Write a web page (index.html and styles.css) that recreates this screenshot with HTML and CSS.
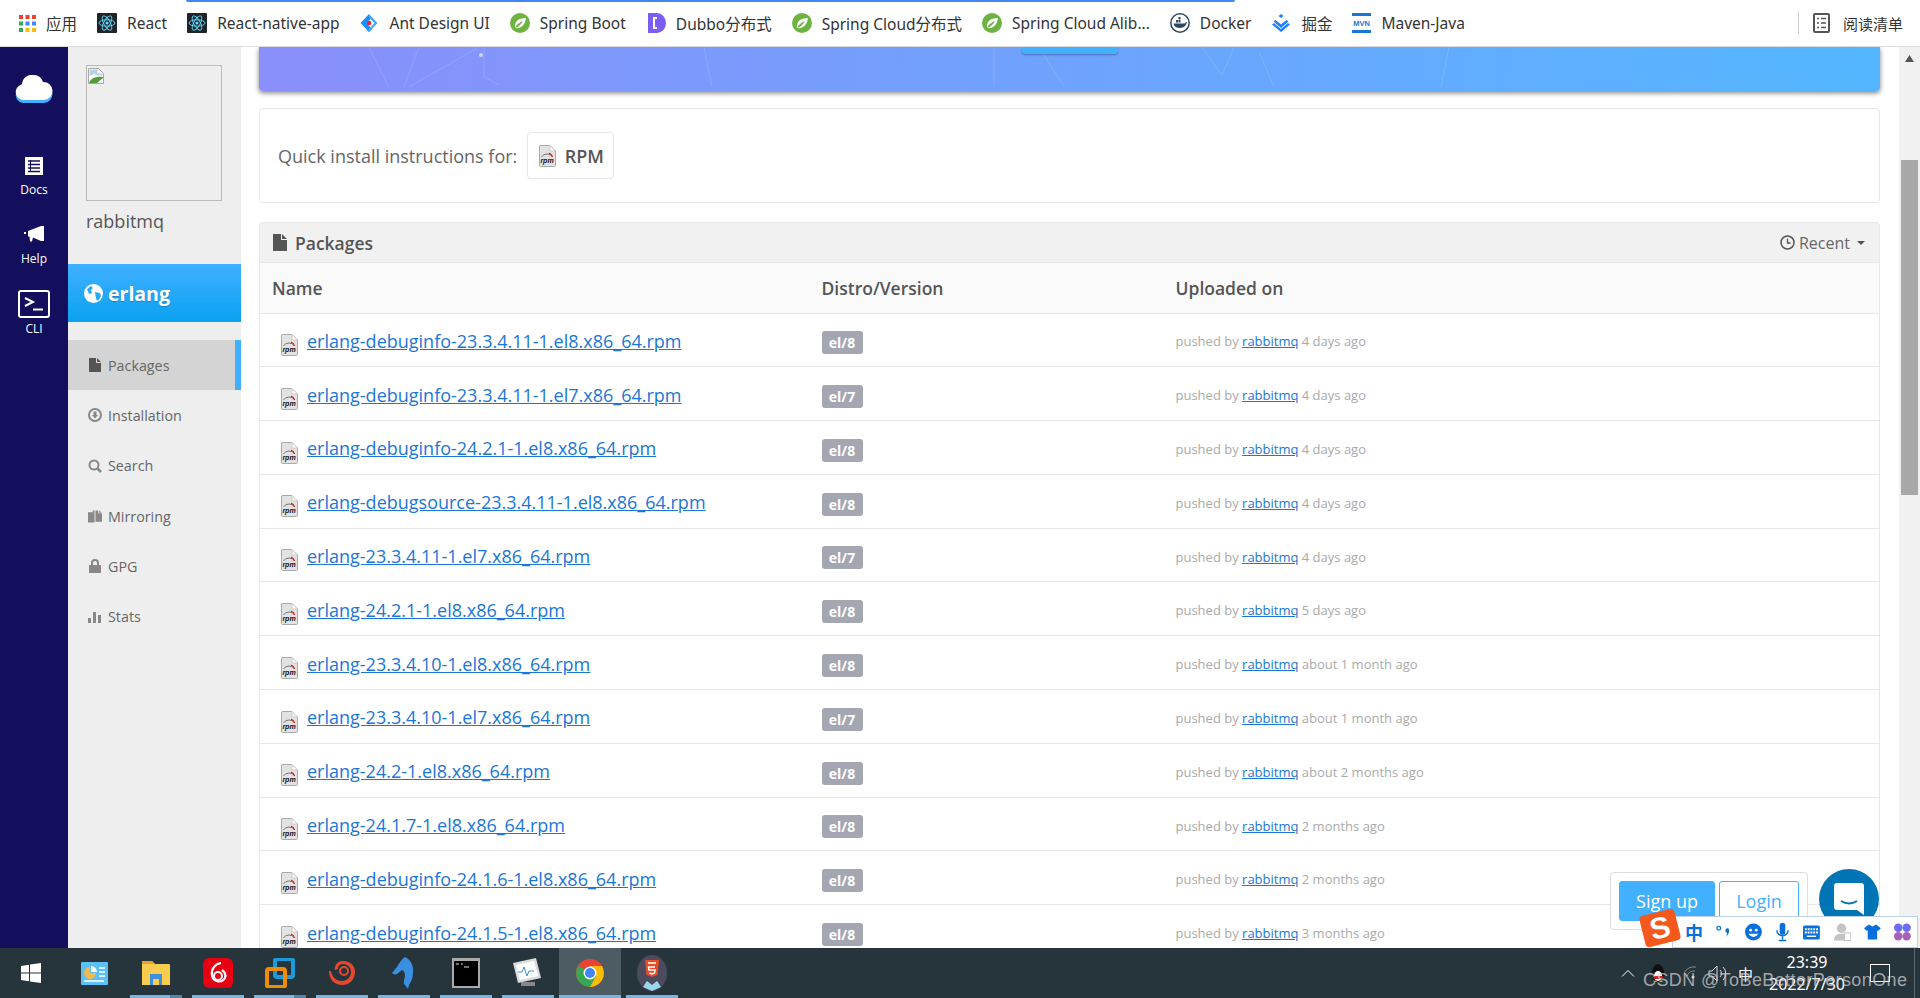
FILE: index.html
```html
<!DOCTYPE html>
<html>
  <head>
    <title>rabbitmq / erlang - Packages</title>
    <link rel="stylesheet" href="styles.css">
  </head>
  <body>
    <svg class="defs" width="0" height="0">
      <symbol id="rpm" viewBox="0 0 18 22">
        <path d="M2 0.500h10l5.500 5.500v14.500a1 1 0 0 1-1 1h-14a1 1 0 0 1-1-1v-19.500a1 1 0 0 1 1-.5z" fill="#e2e2e2" stroke="#aaa"/>
        <path d="M12 .5v5.500h5.500z" fill="#fff" stroke="#ccc"/>
        <path d="M3.500 12a6 5 0 0 1 11 0" fill="none" stroke="#777" stroke-width="1"/>
        <path d="M11 8.200a6 5 0 0 1 3.500 3.800" fill="none" stroke="#d22" stroke-width="1.300"/>
        <text x="9" y="17.500" font-family="Liberation Sans" font-size="7" font-weight="700" font-style="italic" text-anchor="middle" fill="#111">rpm</text>
      </symbol>
      <symbol id="spring" viewBox="0 0 20 20">
        <circle cx="10" cy="10" r="10" fill="#6db33f"/>
        <path d="M5 15c-1-6 3-10 11-10-1 7-5 11-11 10z" fill="#fff"/>
        <path d="M5 15c2-4 5-6 8-7-2 3-4 6-8 7z" fill="#6db33f"/>
      </symbol>
      <symbol id="react" viewBox="0 0 20 20">
        <rect width="20" height="20" rx="1" fill="#20232a"/>
        <g fill="none" stroke="#61dafb" stroke-width=".9">
          <ellipse cx="10" cy="10" rx="8" ry="3.200"/>
          <ellipse cx="10" cy="10" rx="8" ry="3.200" transform="rotate(60 10 10)"/>
          <ellipse cx="10" cy="10" rx="8" ry="3.200" transform="rotate(120 10 10)"/>
        </g>
        <circle cx="10" cy="10" r="1.600" fill="#61dafb"/>
      </symbol>
    </svg>

    <div class="bookmarks">
      <a class="mark">
        <svg width="17" height="17" viewBox="0 0 17 17">
          <g fill="#ea4335"><rect width="4" height="4"/><rect x="6.500" width="4" height="4"/><rect x="13" width="4" height="4" fill="#ea4335"/></g>
          <g fill="#4285f4"><rect y="6.500" width="4" height="4" fill="#34a853"/><rect x="6.500" y="6.500" width="4" height="4"/><rect x="13" y="6.500" width="4" height="4" fill="#4285f4"/></g>
          <g fill="#fbbc05"><rect y="13" width="4" height="4" fill="#34a853"/><rect x="6.500" y="13" width="4" height="4"/><rect x="13" y="13" width="4" height="4"/></g>
        </svg>
        应用
      </a>
      <a class="mark"><svg width="20" height="20"><use href="#react"/></svg>React</a>
      <a class="mark"><svg width="20" height="20"><use href="#react"/></svg>React-native-app</a>
      <a class="mark">
        <svg width="20" height="20" viewBox="0 0 20 20">
          <path d="M10 1L1.500 10 10 19l3-3-5.500-6L10 7.500 12 5.500z" fill="#1890ff"/>
          <path d="M10 1l8.500 9-8.500 9-1.500-1.500 7-7.500-5-5z" fill="#40a9ff"/>
          <circle cx="10" cy="10" r="2.300" fill="#f5222d"/>
        </svg>
        Ant Design UI
      </a>
      <a class="mark"><svg width="20" height="20"><use href="#spring"/></svg>Spring Boot</a>
      <a class="mark dubbo">
        <svg width="18" height="20" viewBox="0 0 18 20">
          <path d="M0 0h9a9 10 0 0 1 9 10 9 10 0 0 1-9 10H0z" fill="#7b5cf5"/>
          <path d="M9 5H6v10h3" fill="none" stroke="#fff" stroke-width="2"/>
        </svg>
        Dubbo分布式
      </a>
      <a class="mark"><svg width="20" height="20"><use href="#spring"/></svg>Spring Cloud分布式</a>
      <a class="mark"><svg width="20" height="20"><use href="#spring"/></svg>Spring Cloud Alib...</a>
      <a class="mark">
        <svg width="20" height="20" viewBox="0 0 20 20">
          <circle cx="10" cy="10" r="9.200" fill="#fff" stroke="#2f4a60" stroke-width="1.500"/>
          <path d="M3.500 10.500h11.500c.5-1 1-1.500 2-1.500-.5 3-3 6-7 6-3.500 0-6-1.500-6.500-4.500zM6 7h2v2.500H6zm2.500 0h2v2.500h-2zm0-3h2v2.500h-2z" fill="#2f4a60"/>
        </svg>
        Docker
      </a>
      <a class="mark">
        <svg width="20" height="20" viewBox="0 0 20 20">
          <path d="M10 1l2.500 2L10 5 7.500 3zM4.500 7L10 11.500 15.500 7l2 1.500L10 15 2.500 8.500z" fill="#1e80ff"/>
          <path d="M1 11.500L10 19l9-7.500-2-1.500-7 6-7-6z" fill="#1e80ff"/>
        </svg>
        掘金
      </a>
      <a class="mark">
        <svg width="19" height="20" viewBox="0 0 19 20">
          <rect width="19" height="3" fill="#1976d2"/>
          <rect y="17" width="19" height="3" fill="#1976d2"/>
          <text x="9.500" y="13" font-family="Liberation Sans" font-size="7.500" font-weight="700" text-anchor="middle" fill="#1976d2">MVN</text>
        </svg>
        Maven-Java
      </a>
      <a class="mark reading">
        <svg width="17" height="20" viewBox="0 0 17 20">
          <rect x="1" y="1" width="15" height="18" rx="1" fill="none" stroke="#555" stroke-width="2"/>
          <path d="M4 5.500h2M8 5.500h5M4 10h2M8 10h5M4 14.500h2M8 14.500h5" stroke="#555" stroke-width="1.500"/>
        </svg>
        阅读清单
      </a>
    </div>
    <div class="load-strip"></div>

    <div class="app">
      <nav class="rail">
        <svg class="logo" width="38" height="28" viewBox="0 0 38 28">
          <path d="M9 28a8 8 0 0 1-2-15.800A10 10 0 0 1 19 3a9 9 0 0 1 9 7 9 9 0 0 1 1 18z" fill="#40b0ff"/>
          <path d="M9 25a8 8 0 0 1-2-15.800A10 10 0 0 1 19 0a9 9 0 0 1 9 7 9 9 0 0 1 1 18z" fill="#fff"/>
        </svg>
        <a class="rail-item docs">
          <svg width="18" height="18" viewBox="0 0 18 18">
            <rect width="18" height="18" fill="#fff"/>
            <path d="M3 4h12M3 7.500h12M3 11h12M3 14.500h12" stroke="#140f5c" stroke-width="1.500"/>
            <path d="M5.500 3v12" stroke="#140f5c" stroke-width="1"/>
          </svg>
          Docs
        </a>
        <a class="rail-item help">
          <svg width="21" height="16" viewBox="0 0 21 16">
            <path d="M4 5l13-5h3v15h-3L9 11.500l-1 4H6L5.500 10.500H4zM0 6h2v2H0z" fill="#fff"/>
          </svg>
          Help
        </a>
        <a class="rail-item cli">
          <span class="cli-box">
            <svg width="20" height="16" viewBox="0 0 20 16">
              <path d="M1 2l8 4-8 4" fill="none" stroke="#fff" stroke-width="2"/>
              <path d="M9 13.500h10" stroke="#fff" stroke-width="2"/>
            </svg>
          </span>
          CLI
        </a>
      </nav>

      <aside class="sidebar">
        <div class="avatar">
          <svg width="16" height="16" viewBox="0 0 16 16">
            <path d="M.5.500h10l5 5v10H.5z" fill="#fff" stroke="#aaa"/>
            <path d="M1.500 1.500h8v4h5v2h-13z" fill="#b9cfe8"/>
            <path d="M3 8l3-3 3 3z" fill="#fff"/>
            <path d="M1 15c2-5 7-7 14-6v1l-6 5z" fill="#4f9e3a"/>
          </svg>
        </div>
        <div class="owner">rabbitmq</div>
        <div class="repo">
          <svg width="19" height="19" viewBox="0 0 19 19">
            <circle cx="9.500" cy="9.500" r="9.500" fill="#fff"/>
            <path d="M3 5l4-3 2 2-2 2 1 3-3 1zM11 8l5 1 1 3-3 5-2-2z" fill="#2ca9f5"/>
          </svg>
          erlang
        </div>
        <ul class="menu">
          <li class="menu-item active">
            <svg width="12" height="14" viewBox="0 0 12 14"><path d="M0 0h7v5h5v9H0zM8 0l4 4H8z" fill="#555"/></svg>
            Packages
          </li>
          <li class="menu-item">
            <svg width="14" height="14" viewBox="0 0 14 14"><circle cx="7" cy="7" r="6" fill="none" stroke="#888" stroke-width="2"/><path d="M5.500 3.500h3V7h1.500L7 10.500 4 7h1.500z" fill="#888"/></svg>
            Installation
          </li>
          <li class="menu-item">
            <svg width="14" height="14" viewBox="0 0 14 14"><circle cx="6" cy="6" r="4.500" fill="none" stroke="#888" stroke-width="2"/><path d="M9 9l4 4" stroke="#888" stroke-width="2.500"/></svg>
            Search
          </li>
          <li class="menu-item">
            <svg width="15" height="13" viewBox="0 0 15 13"><path d="M0 2h5V0h2v13H0zM8 0h3v3h4v9H8zM12 0l3 2.500h-3z" fill="#888"/></svg>
            Mirroring
          </li>
          <li class="menu-item">
            <svg width="14" height="14" viewBox="0 0 14 14"><path d="M3 6V4a4 4 0 0 1 8 0v2h2v8H1V6zm2 0h4V4a2 2 0 0 0-4 0z" fill="#888"/></svg>
            GPG
          </li>
          <li class="menu-item">
            <svg width="14" height="13" viewBox="0 0 14 13"><path d="M0 8h3v5H0zM5 2h3v11H5zM10 5h3v8h-3z" fill="#888"/></svg>
            Stats
          </li>
        </ul>
      </aside>

      <main class="content">
        <div class="banner">
          <svg class="banner-lines" width="100%" height="44">
            <g stroke="#fff" stroke-opacity=".14" fill="none">
              <path d="M110 0l20 40M160 0l-15 40M220 0l-70 40M225 0v30l15 8M445 0l8 40M780 0l25 40M735 0v40M975 0l-12 28 -20-28M1000 5l15 35M1190 0l-8 40"/>
            </g>
            <circle cx="222" cy="8" r="2" fill="#fff" fill-opacity=".6"/>
          </svg>
          <div class="banner-btn"></div>
        </div>

        <section class="quick">
          <span>Quick install instructions for:</span>
          <a class="rpm-btn"><svg width="18" height="22"><use href="#rpm"/></svg>RPM</a>
        </section>

        <section class="packages">
          <header class="packages-head">
            <h4>
              <svg width="14" height="17" viewBox="0 0 14 17"><path d="M0 0h8v6h6v11H0zM9 0l5 5H9z" fill="#555"/></svg>
              Packages
            </h4>
            <span class="sort">
              <svg width="15" height="15" viewBox="0 0 15 15"><circle cx="7.500" cy="7.500" r="6.500" fill="none" stroke="#555" stroke-width="1.500"/><path d="M7.500 3.500v4.500h3" fill="none" stroke="#555" stroke-width="1.300"/></svg>
              Recent
              <i class="caret"></i>
            </span>
          </header>
          <table class="pkg-table">
            <thead>
              <tr><th class="col-name">Name</th><th class="col-distro">Distro/Version</th><th>Uploaded on</th></tr>
            </thead>
            <tbody>
              <tr><td><svg width="18" height="22"><use href="#rpm"/></svg><a>erlang-debuginfo-23.3.4.11-1.el8.x86_64.rpm</a></td><td><span class="badge">el/8</span></td><td class="pushed">pushed by <a>rabbitmq</a> 4 days ago</td></tr>
              <tr><td><svg width="18" height="22"><use href="#rpm"/></svg><a>erlang-debuginfo-23.3.4.11-1.el7.x86_64.rpm</a></td><td><span class="badge">el/7</span></td><td class="pushed">pushed by <a>rabbitmq</a> 4 days ago</td></tr>
              <tr><td><svg width="18" height="22"><use href="#rpm"/></svg><a>erlang-debuginfo-24.2.1-1.el8.x86_64.rpm</a></td><td><span class="badge">el/8</span></td><td class="pushed">pushed by <a>rabbitmq</a> 4 days ago</td></tr>
              <tr><td><svg width="18" height="22"><use href="#rpm"/></svg><a>erlang-debugsource-23.3.4.11-1.el8.x86_64.rpm</a></td><td><span class="badge">el/8</span></td><td class="pushed">pushed by <a>rabbitmq</a> 4 days ago</td></tr>
              <tr><td><svg width="18" height="22"><use href="#rpm"/></svg><a>erlang-23.3.4.11-1.el7.x86_64.rpm</a></td><td><span class="badge">el/7</span></td><td class="pushed">pushed by <a>rabbitmq</a> 4 days ago</td></tr>
              <tr><td><svg width="18" height="22"><use href="#rpm"/></svg><a>erlang-24.2.1-1.el8.x86_64.rpm</a></td><td><span class="badge">el/8</span></td><td class="pushed">pushed by <a>rabbitmq</a> 5 days ago</td></tr>
              <tr><td><svg width="18" height="22"><use href="#rpm"/></svg><a>erlang-23.3.4.10-1.el8.x86_64.rpm</a></td><td><span class="badge">el/8</span></td><td class="pushed">pushed by <a>rabbitmq</a> about 1 month ago</td></tr>
              <tr><td><svg width="18" height="22"><use href="#rpm"/></svg><a>erlang-23.3.4.10-1.el7.x86_64.rpm</a></td><td><span class="badge">el/7</span></td><td class="pushed">pushed by <a>rabbitmq</a> about 1 month ago</td></tr>
              <tr><td><svg width="18" height="22"><use href="#rpm"/></svg><a>erlang-24.2-1.el8.x86_64.rpm</a></td><td><span class="badge">el/8</span></td><td class="pushed">pushed by <a>rabbitmq</a> about 2 months ago</td></tr>
              <tr><td><svg width="18" height="22"><use href="#rpm"/></svg><a>erlang-24.1.7-1.el8.x86_64.rpm</a></td><td><span class="badge">el/8</span></td><td class="pushed">pushed by <a>rabbitmq</a> 2 months ago</td></tr>
              <tr><td><svg width="18" height="22"><use href="#rpm"/></svg><a>erlang-debuginfo-24.1.6-1.el8.x86_64.rpm</a></td><td><span class="badge">el/8</span></td><td class="pushed">pushed by <a>rabbitmq</a> 2 months ago</td></tr>
              <tr><td><svg width="18" height="22"><use href="#rpm"/></svg><a>erlang-debuginfo-24.1.5-1.el8.x86_64.rpm</a></td><td><span class="badge">el/8</span></td><td class="pushed">pushed by <a>rabbitmq</a> 3 months ago</td></tr>
            </tbody>
          </table>
        </section>
      </main>

      <div class="scrollbar">
        <svg width="9" height="7" viewBox="0 0 9 7"><path d="M4.500 0L9 7H0z" fill="#555"/></svg>
        <div class="thumb"></div>
      </div>

      <div class="auth-pop">
        <a class="signup">Sign up</a>
        <a class="login">Login</a>
      </div>
      <div class="chat">
        <svg width="30" height="32" viewBox="0 0 30 32">
          <path d="M3 0h24a3 3 0 0 1 3 3v29l-7-5H3a3 3 0 0 1-3-3V3a3 3 0 0 1 3-3z" fill="#fff"/>
          <path d="M7 18c5 3 11 3 16 0" fill="none" stroke="#0075b5" stroke-width="2"/>
        </svg>
      </div>
    </div>

    <footer class="taskbar">
      <div class="task start">
        <svg width="20" height="20" viewBox="0 0 20 20"><path d="M0 3l8-1.200v7.700H0zM9 1.600L20 0v9.500H9zM0 10.500h8v7.700L0 17zM9 10.500h11V20L9 18.400z" fill="#fff"/></svg>
      </div>
      <div class="task">
        <svg width="27" height="23" viewBox="0 0 27 23"><rect width="27" height="23" rx="1" fill="#5cc0f5"/><path d="M9 5a6 6 0 1 0 6 6H9z" fill="#f5b94a"/><path d="M10 4a6 6 0 0 1 6 6h-6z" fill="#fff"/><path d="M18 6h6M18 10h6M18 14h6M3 19h20" stroke="#fff" stroke-width="1.500"/></svg>
      </div>
      <div class="task open split">
        <svg width="28" height="26" viewBox="0 0 28 26"><path d="M0 2a1 1 0 0 1 1-1h9l3 3h14a1 1 0 0 1 1 1v20H0z" fill="#f8cc4f"/><path d="M0 1h10l3 3H0z" fill="#e5a42f"/><path d="M8 14h12v11h-3v-6h-6v6H8z" fill="#3d90d8"/></svg>
      </div>
      <div class="task open">
        <svg width="30" height="30" viewBox="0 0 30 30"><rect width="30" height="30" rx="6" fill="#e60012"/><circle cx="15" cy="18" r="4" fill="none" stroke="#fff" stroke-width="2"/><path d="M18 5c-6 1-10 6-9 12a7 7 0 0 0 13 3c1-3 0-6-3-8" fill="none" stroke="#fff" stroke-width="2.200"/></svg>
      </div>
      <div class="task open split">
        <svg width="30" height="30" viewBox="0 0 30 30"><rect x="10" y="1" width="18" height="18" rx="2" fill="none" stroke="#1d9bd8" stroke-width="4"/><rect x="2" y="11" width="18" height="18" rx="2" fill="none" stroke="#f08c00" stroke-width="4"/></svg>
      </div>
      <div class="task open">
        <svg width="30" height="28" viewBox="0 0 30 28"><path d="M2 12c0 9 6 14 13 14 8 0 13-6 13-13S23 2 16 2c-6 0-9 5-8 9l3-1c0-3 2-5 5-5 5 0 8 4 8 8 0 5-4 9-9 9-6 0-10-4-11-10z" fill="#e5482d"/><circle cx="17" cy="12" r="4" fill="none" stroke="#e5482d" stroke-width="2"/></svg>
      </div>
      <div class="task open">
        <svg width="26" height="32" viewBox="0 0 26 32"><path d="M14 0c6 3 9 9 8 16 0 5-2 9-4 12l-1 4-3-4c-2-1-1-5 0-9 0-3-1-5-3-6l-5 4c-2 1-4 0-5-1l5-6c2-4 5-8 8-10z" fill="#3a8fe0"/></svg>
      </div>
      <div class="task open">
        <svg width="28" height="30" viewBox="0 0 28 30"><rect width="28" height="30" fill="#aaa"/><rect x="2" y="3" width="24" height="25" fill="#000"/><path d="M4 6h3M9 6h2M12 9h5" stroke="#ddd"/></svg>
      </div>
      <div class="task open">
        <svg width="30" height="30" viewBox="0 0 30 30"><path d="M0 5l23-5 5 20-23 5z" fill="#d9dde0"/><path d="M3 7l18-4 4 15-18 4z" fill="#fff"/><path d="M5 14h4l2-5 3 9 2-5h5" fill="none" stroke="#3c8fd0" stroke-width="1"/><path d="M8 24h14v4H8z" fill="#888"/></svg>
      </div>
      <div class="task open current">
        <svg width="28" height="28" viewBox="0 0 28 28"><circle cx="14" cy="14" r="14" fill="#ea4335"/><path d="M14 28a14 14 0 0 0 12-21H14z" fill="#fbbc05"/><path d="M14 28L20 17 14 14 7 9 2 7a14 14 0 0 0 12 21z" fill="#34a853"/><circle cx="14" cy="14" r="6.500" fill="#fff"/><circle cx="14" cy="14" r="5" fill="#4285f4"/></svg>
      </div>
      <div class="task open">
        <svg width="30" height="36" viewBox="0 0 30 36"><ellipse cx="15" cy="18" rx="15" ry="18" fill="#4b4a5e"/><path d="M8 5h14l-1.500 15L15 22l-5.500-2z" fill="#e44d26"/><path d="M11 8h8M18 12h-6.500l.5 3h6l-.5 3-2.500 1-2.500-1" fill="none" stroke="#fff" stroke-width="1.500"/><path d="M6 32l4-6 5 4 5-4 4 6-9 4z" fill="#9cd5ee"/></svg>
      </div>
      <div class="tray">
        <svg class="tray-caret" width="14" height="8" viewBox="0 0 14 8"><path d="M1 7.500l6-6 6 6" fill="none" stroke="#fff"/></svg>
        <svg class="tray-qq" width="16" height="19" viewBox="0 0 16 19"><ellipse cx="8" cy="9" rx="6" ry="9" fill="#111"/><ellipse cx="8" cy="12" rx="4" ry="5" fill="#fff"/><path d="M3 12h10l-1 3H4z" fill="#d3232a"/><path d="M3 18h4l-1-2zM9 18h4l-2-2z" fill="#f5a623"/></svg>
        <svg class="tray-wifi" width="17" height="15" viewBox="0 0 17 15"><path d="M1 7a12 12 0 0 1 12-6M4 10a8 8 0 0 1 8-5" fill="none" stroke="#888"/><circle cx="10" cy="11" r="1.500" fill="#ddd"/></svg>
        <svg class="tray-sound" width="20" height="17" viewBox="0 0 20 17"><path d="M1 6h3l5-5v15l-5-5H1zM12 5a5 5 0 0 1 0 7M15 2a9 9 0 0 1 0 13" fill="none" stroke="#ddd"/></svg>
        <span class="tray-ime">中</span>
        <div class="clock"><span>23:39</span><span>2022/7/30</span></div>
        <div class="notify"></div>
      </div>
    </footer>

    <div class="ime-bar">
      <span class="ime-s">S</span>
      <span class="ime-zh">中</span>
      <svg width="16" height="14" viewBox="0 0 16 14"><circle cx="3" cy="3" r="2" fill="none" stroke="#0a6fdb" stroke-width="1.300"/><path d="M13 3c2 2 1 6-2 9l1-4a2 2 0 0 1 1-5z" fill="#0a6fdb"/></svg>
      <svg width="18" height="18" viewBox="0 0 18 18"><circle cx="9" cy="9" r="9" fill="#0a6fdb"/><circle cx="6" cy="7" r="1.500" fill="#fff"/><circle cx="12" cy="7" r="1.500" fill="#fff"/><path d="M4 11a5.500 5.500 0 0 0 10 0z" fill="#fff"/></svg>
      <svg width="16" height="20" viewBox="0 0 16 20"><rect x="5" width="6" height="13" rx="3" fill="#0a6fdb"/><path d="M2 8a6 6 0 0 0 12 0M8 14v4M4 19h8" fill="none" stroke="#0a6fdb" stroke-width="1.500"/></svg>
      <svg width="18" height="15" viewBox="0 0 18 15"><rect width="18" height="15" rx="2" fill="#0a6fdb"/><path d="M2 4h14M2 7.500h14" stroke="#fff" stroke-dasharray="2 1" stroke-width="2"/><path d="M4 11.500h10" stroke="#fff" stroke-width="1.500"/></svg>
      <svg width="18" height="18" viewBox="0 0 18 18"><circle cx="8" cy="5" r="5" fill="#c4c4c4"/><path d="M0 18c0-5 3-7 8-7s6 2 6 7z" fill="#c4c4c4"/><rect x="11" y="10" width="7" height="8" fill="#fff" stroke="#bbb"/></svg>
      <svg width="18" height="16" viewBox="0 0 18 16"><path d="M5 0l4 2 4-2 5 4-3 3-1-1v10H4V6L3 7 0 4z" fill="#0a6fdb"/></svg>
      <svg width="18" height="18" viewBox="0 0 18 18"><circle cx="4.500" cy="4.500" r="4.500" fill="#6b6cf0"/><circle cx="13.500" cy="4.500" r="4.500" fill="#6b6cf0"/><circle cx="4.500" cy="13.500" r="4.500" fill="#a860b8"/><circle cx="13.500" cy="13.500" r="4.500" fill="#a860b8"/></svg>
    </div>
    <div class="watermark">CSDN @ToBeBetterPersonOne</div>
  </body>
</html>
```

FILE: styles.css
```css
*{
  box-sizing: border-box;
}
html, body{
  height: 100%;
}
body{
  margin: 0;
  position: relative;
  overflow: hidden;
  display: flex;
  flex-direction: column;
  font-family: "Open Sans", "Noto Sans CJK SC", sans-serif;
  color: #555;
  background: #fff;
}
.defs{
  display: none;
}
ul{
  list-style: none;
  margin: 0;
  padding: 0;
}

/* browser bookmarks */
.bookmarks{
  height: 47px;
  flex: none;
  display: flex;
  align-items: center;
  gap: 20px;
  padding: 0 17px 0 19px;
  background: #fff;
  border-bottom: 1px solid #dcdcdc;
  font-family: "Noto Sans", "Noto Sans CJK SC", sans-serif;
  font-size: 15.5px;
  color: #333;
}
.mark{
  display: flex;
  align-items: center;
  gap: 10px;
  white-space: nowrap;
}
.dubbo{
  margin-left: 2px;
}
.reading{
  margin-left: auto;
  padding-left: 14px;
  border-left: 1px solid #ccc;
  height: 22px;
  gap: 13px;
  font-size: 15px;
}
.load-strip{
  position: absolute;
  left: 186px;
  top: 0;
  width: 1049px;
  height: 2px;
  background: #4285f4;
  border-radius: 0 0 3px 3px;
}

.app{
  flex: 1;
  min-height: 0;
  display: flex;
  position: relative;
}

/* dark rail */
.rail{
  width: 68px;
  flex: none;
  display: flex;
  flex-direction: column;
  align-items: center;
  background: #140f5c;
  color: #fff;
  font-size: 12px;
  padding-top: 28px;
}
.rail-item{
  display: flex;
  flex-direction: column;
  align-items: center;
}
.docs{
  margin-top: 54px;
  gap: 6px;
}
.help{
  margin-top: 28px;
  gap: 8px;
}
.cli{
  margin-top: 23px;
  gap: 2px;
}
.cli-box{
  width: 32px;
  height: 28px;
  display: flex;
  align-items: center;
  justify-content: center;
  border: 2px solid #fff;
  border-radius: 3px;
}

/* repo sidebar */
.sidebar{
  width: 173px;
  flex: none;
  background: #eee;
  padding-top: 18px;
}
.avatar{
  width: 136px;
  height: 136px;
  margin-left: 18px;
  padding: 1px;
  border: 1px solid #bbb;
}
.owner{
  margin: 8px 0 0 18px;
  font-size: 18px;
  line-height: 25px;
  color: #555;
}
.repo{
  height: 58px;
  margin-top: 30px;
  padding-left: 16px;
  display: flex;
  align-items: center;
  gap: 5px;
  font-size: 19.5px;
  font-weight: 700;
  color: #fff;
  background: linear-gradient(#40b0ff, #0aa2f0);
  text-shadow: 0 1px 1px rgba(0,0,0,.2);
}
.menu{
  margin-top: 18px;
}
.menu-item{
  height: 50.3px;
  padding-left: 20px;
  display: flex;
  align-items: center;
  gap: 6px;
  font-size: 14.3px;
  color: #666;
}
.menu-item svg{
  width: 14px;
}
.active{
  background: #d4d4d4;
  border-right: 6px solid #40b0ff;
}

/* main column */
.content{
  flex: 1;
  min-width: 0;
  overflow: hidden;
  padding: 0 19px 0 18px;
}
.banner{
  height: 44px;
  position: relative;
  background: linear-gradient(95deg, #8a8ffb, #53b6ff);
  border-radius: 0 0 4px 4px;
  box-shadow: 0 2px 5px rgba(0,0,0,.5);
}
.banner-lines{
  position: absolute;
  left: 0;
  top: 0;
}
.banner-btn{
  position: absolute;
  left: 763px;
  top: 0;
  width: 96px;
  height: 7px;
  background: #40b0ff;
  border-radius: 0 0 3px 3px;
  box-shadow: 0 1px 2px rgba(0,0,0,.3);
}
.quick{
  height: 95px;
  margin-top: 17px;
  padding-left: 18px;
  display: flex;
  align-items: center;
  gap: 10px;
  border: 1px solid #e7e7e7;
  border-radius: 4px;
  font-size: 18px;
  color: #666;
}
.rpm-btn{
  width: 87px;
  height: 47px;
  display: flex;
  align-items: center;
  justify-content: center;
  gap: 9px;
  border: 1px solid #e7e7e7;
  border-radius: 4px;
  font-weight: 600;
  color: #555;
}
.packages{
  margin-top: 19px;
}
.packages-head{
  height: 41px;
  padding: 0 14px 0 13px;
  display: flex;
  align-items: center;
  justify-content: space-between;
  background: #f1f1f1;
  border: 1px solid #e7e7e7;
  border-radius: 4px 4px 0 0;
}
.packages-head h4{
  margin: 0;
  display: flex;
  align-items: center;
  gap: 8px;
  font-size: 17.5px;
  font-weight: 600;
  color: #555;
}
.sort{
  display: flex;
  align-items: center;
  gap: 4px;
  font-size: 16px;
  color: #666;
}
.caret{
  margin-left: 3px;
  border-top: 4px solid #555;
  border-left: 4px solid transparent;
  border-right: 4px solid transparent;
}

/* package list */
.pkg-table{
  width: 100%;
  table-layout: fixed;
  border-collapse: collapse;
  border-left: 1px solid #e7e7e7;
  border-right: 1px solid #e7e7e7;
}
.pkg-table th{
  height: 50px;
  padding: 0 13px;
  text-align: left;
  font-size: 17.5px;
  font-weight: 600;
  background: #fafafa;
  border-bottom: 1px solid #e7e7e7;
}
.pkg-table th:first-child{
  padding-left: 12px;
}
.pkg-table th:last-child{
  padding-left: 14px;
}
.pkg-table .col-name{
  width: 549px;
}
.pkg-table .col-distro{
  width: 353px;
}
.pkg-table td{
  height: 53.8px;
  padding: 3px 14px 0 13px;
  border-bottom: 1px solid #e7e7e7;
  font-size: 18px;
  vertical-align: middle;
}
.pkg-table td:first-child{
  padding-left: 20px;
}
.pkg-table td:last-child{
  padding-left: 14px;
}
.pkg-table td svg{
  vertical-align: middle;
  margin-right: 9px;
  position: relative;
  top: 2px;
}
.pkg-table a{
  color: #1a76d8;
  text-decoration: underline;
}
.badge{
  display: inline-block;
  width: 41px;
  height: 23px;
  line-height: 23px;
  text-align: center;
  border-radius: 3px;
  background: #a4a6b2;
  color: #fff;
  font-size: 14px;
  font-weight: 700;
  vertical-align: middle;
}
.pkg-table .pushed{
  font-size: 13px;
  color: #aaa;
}

.scrollbar{
  width: 21px;
  flex: none;
  background: #f1f1f1;
  padding-top: 8px;
  display: flex;
  flex-direction: column;
  align-items: center;
}
.thumb{
  width: 17px;
  height: 335px;
  margin-top: 98px;
  background: #a8a8a8;
}

/* floating bits on top of the page */
.auth-pop{
  position: absolute;
  left: 1610px;
  top: 825px;
  width: 198px;
  height: 58px;
  padding: 8px;
  display: flex;
  gap: 4px;
  background: #fff;
  border: 1px solid #ddd;
  border-radius: 4px;
  font-size: 18px;
  text-align: center;
}
.signup, .login{
  height: 40px;
  line-height: 38px;
  border-radius: 3px;
  border: 1px solid #40b0ff;
}
.signup{
  width: 96px;
  background: #40b0ff;
  color: #fff;
}
.login{
  width: 80px;
  color: #40b0ff;
}
.chat{
  position: absolute;
  left: 1819px;
  top: 822px;
  width: 60px;
  height: 60px;
  padding-top: 14px;
  border-radius: 50%;
  background: #0075b5;
  display: flex;
  justify-content: center;
}

/* windows taskbar */
.taskbar{
  height: 50px;
  flex: none;
  display: flex;
  background: #26343c;
  color: #fff;
}
.task{
  width: 62px;
  display: flex;
  align-items: center;
  justify-content: center;
}
.start{
  width: 63px;
  padding-right: 2px;
}
.open{
  background: linear-gradient(#76b4e4, #76b4e4) center bottom / 52px 3px no-repeat;
}
.split{
  background: linear-gradient(to right, #76b4e4 40px, #4f87ad 40px) center bottom / 52px 3px no-repeat;
}
.current{
  background: linear-gradient(#76b4e4, #76b4e4) center bottom / 62px 3px no-repeat, #4d5c63;
}
.tray{
  flex: 1;
  display: flex;
  align-items: center;
  padding-left: 938px;
  border-right: 1px solid #5a666c;
  margin-right: 5px;
}
.tray-caret{
  margin-right: 15px;
}
.tray-qq{
  margin-right: 17px;
}
.tray-wifi{
  margin-right: 8px;
}
.tray-sound{
  margin-right: 10px;
}
.tray-ime{
  font-size: 15px;
  width: 22px;
}
.clock{
  width: 90px;
  margin-left: 2px;
  display: flex;
  flex-direction: column;
  align-items: center;
  font-family: "Noto Sans", sans-serif;
  font-size: 16px;
  line-height: 22px;
}
.notify{
  width: 20px;
  height: 18px;
  margin-left: 18px;
  border: 1px solid #fff;
}

.ime-bar{
  position: absolute;
  left: 1672px;
  top: 916px;
  width: 246px;
  height: 32px;
  padding: 0 6px 0 10px;
  display: flex;
  align-items: center;
  gap: 13.4px;
  background: #fff;
  border: 1px solid #bcd0ea;
}
.ime-s{
  position: absolute;
  left: -31px;
  top: -5px;
  width: 36px;
  height: 32px;
  transform: rotate(-14deg);
  border-radius: 4px;
  background: #f4581c;
  color: #fff;
  font: 700 30px/32px "Liberation Sans", sans-serif;
  text-align: center;
}
.ime-zh{
  margin-left: 2px;
  font-size: 18px;
  font-weight: 700;
  color: #0a6fdb;
}
.watermark{
  position: absolute;
  left: 1643px;
  top: 970px;
  font-family: "Liberation Sans", sans-serif;
  font-size: 18px;
  line-height: 20px;
  letter-spacing: .4px;
  color: rgba(205,205,205,.75);
  white-space: nowrap;
}
```
